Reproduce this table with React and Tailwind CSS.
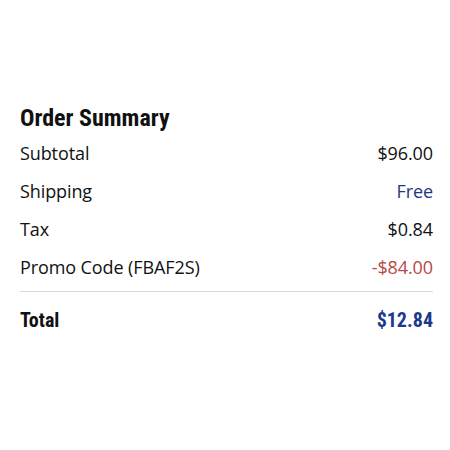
const rows = [
  { label: 'Subtotal', value: '$96.00', tone: 'text-[#111111]' },
  { label: 'Shipping', value: 'Free', tone: 'text-[#1c3a7c]' },
  { label: 'Tax', value: '$0.84', tone: 'text-[#111111]' },
  { label: 'Promo Code (FBAF2S)', value: '-$84.00', tone: 'text-[#b54a48]' },
];

export default function App() {
  return (
    <div className="w-[450px] h-[450px] bg-white pl-5 pr-[17px] pt-[102px] font-['Open_Sans',sans-serif] text-[#111111]">
      <h2 className="text-[24px] leading-[32px] font-bold font-stretch-[83%] font-['Roboto',sans-serif] text-[#111111]">
        Order Summary
      </h2>
      <div className="flex flex-col">
        {rows.map((r) => (
          <div key={r.label} className="flex items-center justify-between h-[38px] text-[18px] tracking-[-0.1px]">
            <span>{r.label}</span>
            <span className={r.tone}>{r.value}</span>
          </div>
        ))}
      </div>
      <div className="border-t border-[#d9d9d9] mt-[5px]" />
      <div className="flex items-center justify-between h-[56px] font-['Roboto',sans-serif] font-stretch-[84%] font-bold text-[20px]">
        <span>Total</span>
        <span className="text-[#1b3a8c]">$12.84</span>
      </div>
    </div>
  );
}
